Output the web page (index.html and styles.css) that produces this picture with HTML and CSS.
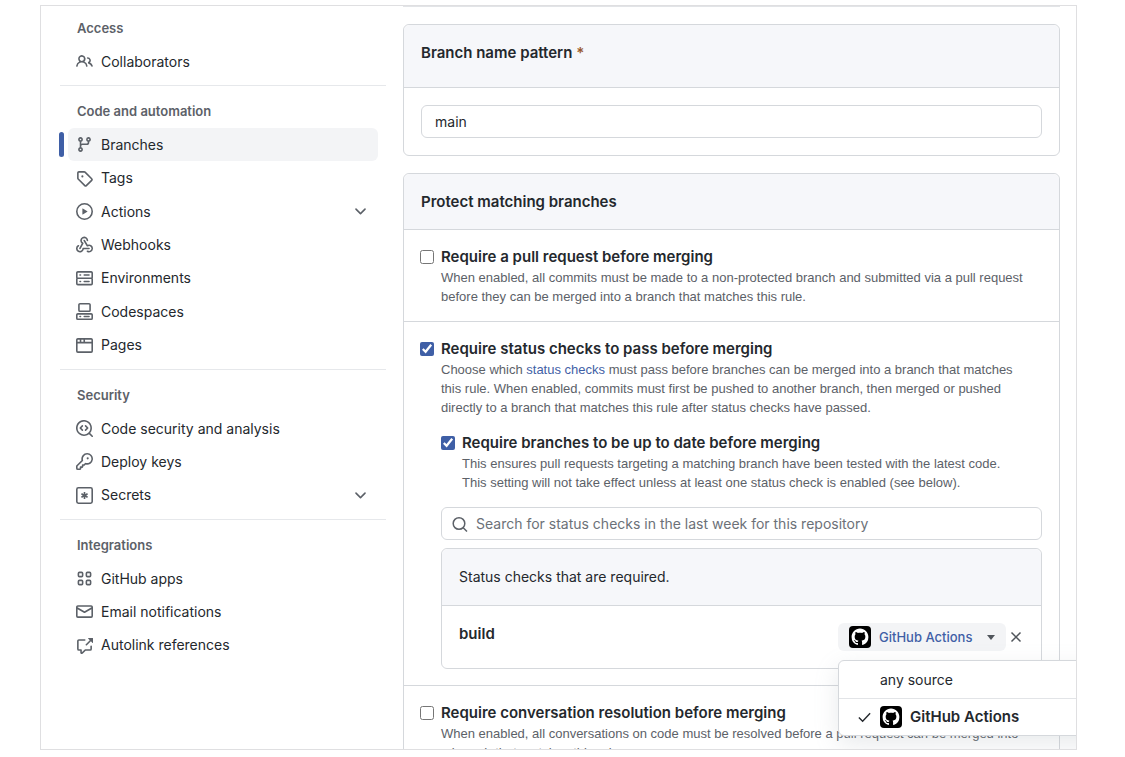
FILE: index.html
```html
<!DOCTYPE html>
<html lang="en">
<head>
<meta charset="utf-8">
<meta name="viewport" content="width=device-width, initial-scale=1">
<title>Branch protection rule</title>
<link rel="stylesheet" href="styles.css">
</head>
<body>
<svg class="sprite" aria-hidden="true">
  <symbol id="github" viewBox="0 0 22 22">
    <rect width="22" height="22" rx="4" fill="#000"/>
    <path transform="translate(2.6 2.6) scale(1.05)" fill="#fff" d="M8 0c4.42 0 8 3.58 8 8a8.013 8.013 0 0 1-5.45 7.59c-.4.08-.55-.17-.55-.38 0-.27.01-1.13.01-2.2 0-.75-.25-1.23-.54-1.48 1.78-.2 3.65-.88 3.65-3.95 0-.88-.31-1.59-.82-2.15.08-.2.36-1.02-.08-2.12 0 0-.67-.22-2.2.82-.64-.18-1.32-.27-2-.27-.68 0-1.36.09-2 .27-1.53-1.03-2.2-.82-2.2-.82-.44 1.1-.16 1.92-.08 2.12-.51.56-.82 1.28-.82 2.15 0 3.06 1.86 3.75 3.64 3.95-.23.2-.44.55-.51 1.07-.46.21-1.61.55-2.33-.66-.15-.24-.6-.83-1.23-.82-.67.01-.27.38.01.53.34.19.73.9.82 1.13.16.45.68 1.31 2.69.94 0 .67.01 1.3.01 1.49 0 .21-.15.45-.55.38A7.995 7.995 0 0 1 0 8c0-4.42 3.58-8 8-8Z"/>
  </symbol>
  <symbol id="chevron" viewBox="0 0 16 16">
    <path d="M12.78 5.22a.749.749 0 0 1 0 1.06l-4.25 4.25a.749.749 0 0 1-1.06 0L3.22 6.28a.749.749 0 1 1 1.06-1.06L8 8.939l3.72-3.719a.749.749 0 0 1 1.06 0Z"/>
  </symbol>
</svg>

<div class="frame">
  <nav class="sidebar" aria-label="Settings">
    <section class="group">
      <h2 class="group-title">Access</h2>
      <ul class="list">
        <li><a class="item" href="#collaborators"><svg class="icon" viewBox="0 0 16 16"><path d="M2 5.5a3.5 3.5 0 1 1 5.898 2.549 5.508 5.508 0 0 1 3.034 4.084.75.75 0 1 1-1.482.235 4 4 0 0 0-7.9 0 .75.75 0 0 1-1.482-.236A5.507 5.507 0 0 1 3.102 8.05 3.493 3.493 0 0 1 2 5.5ZM11 4a3.001 3.001 0 0 1 2.22 5.018 5.01 5.01 0 0 1 2.56 3.012.749.749 0 0 1-.885.954.752.752 0 0 1-.549-.514 3.507 3.507 0 0 0-2.522-2.372.75.75 0 0 1-.574-.73v-.352a.75.75 0 0 1 .416-.672A1.5 1.5 0 0 0 11 5.5.75.75 0 0 1 11 4Zm-5.5-.5a2 2 0 1 0-.001 3.999A2 2 0 0 0 5.5 3.5Z"/></svg>Collaborators</a></li>
      </ul>
    </section>
    <section class="group">
      <h2 class="group-title">Code and automation</h2>
      <ul class="list list-seven">
        <li><a class="item item-current" href="#branches" aria-current="page"><svg class="icon" viewBox="0 0 16 16"><path d="M9.5 3.25a2.25 2.25 0 1 1 3 2.122V6A2.5 2.5 0 0 1 10 8.5H6a1 1 0 0 0-1 1v1.128a2.251 2.251 0 1 1-1.5 0V5.372a2.25 2.25 0 1 1 1.5 0v1.836A2.493 2.493 0 0 1 6 7h4a1 1 0 0 0 1-1v-.628A2.25 2.25 0 0 1 9.5 3.25Zm-6 0a.75.75 0 1 0 1.5 0 .75.75 0 0 0-1.5 0Zm8.25-.75a.75.75 0 1 0 0 1.5.75.75 0 0 0 0-1.5ZM4.25 12a.75.75 0 1 0 0 1.5.75.75 0 0 0 0-1.5Z"/></svg>Branches</a></li>
        <li><a class="item" href="#tags"><svg class="icon" viewBox="0 0 16 16"><path d="M1 7.775V2.75C1 1.784 1.784 1 2.75 1h5.025c.464 0 .91.184 1.238.513l6.25 6.25a1.75 1.75 0 0 1 0 2.474l-5.026 5.026a1.75 1.75 0 0 1-2.474 0l-6.25-6.25A1.752 1.752 0 0 1 1 7.775Zm1.5 0c0 .066.026.13.073.177l6.25 6.25a.25.25 0 0 0 .354 0l5.025-5.025a.25.25 0 0 0 0-.354l-6.25-6.25a.25.25 0 0 0-.177-.073H2.75a.25.25 0 0 0-.25.25ZM6 5a1 1 0 1 1 0 2 1 1 0 0 1 0-2Z"/></svg>Tags</a></li>
        <li><a class="item" href="#actions"><svg class="icon" viewBox="0 0 16 16"><path d="M8 0a8 8 0 1 1 0 16A8 8 0 0 1 8 0ZM1.5 8a6.5 6.5 0 1 0 13 0 6.5 6.5 0 0 0-13 0Zm4.879-2.773 4.264 2.559a.25.25 0 0 1 0 .428l-4.264 2.559A.25.25 0 0 1 6 10.559V5.442a.25.25 0 0 1 .379-.215Z"/></svg>Actions<svg class="icon chevron"><use href="#chevron"/></svg></a></li>
        <li><a class="item" href="#webhooks"><svg class="icon" viewBox="0 0 16 16"><path d="M5.5 4.25a2.25 2.25 0 0 1 4.5 0 .75.75 0 0 0 1.5 0 3.75 3.75 0 1 0-6.14 2.889l-2.272 4.258a.75.75 0 0 0 1.324.706L7 7.25a.75.75 0 0 0-.309-1.015A2.25 2.25 0 0 1 5.5 4.25Z"/><path d="M7.364 3.607a.75.75 0 0 1 1.03.257l2.608 4.349a3.75 3.75 0 1 1-.628 6.785.75.75 0 0 1 .752-1.299 2.25 2.25 0 1 0-.033-3.88.75.75 0 0 1-1.03-.256L7.107 4.636a.75.75 0 0 1 .257-1.03Z"/><path d="M2.9 8.776A.75.75 0 0 1 2.625 9.8 2.25 2.25 0 1 0 6 11.75a.75.75 0 0 1 .75-.751h5.5a.75.75 0 0 1 0 1.5H7.425a3.751 3.751 0 1 1-5.55-3.998.75.75 0 0 1 1.024.274Z"/></svg>Webhooks</a></li>
        <li><a class="item" href="#environments"><svg class="icon" viewBox="0 0 16 16"><path d="M1.75 1h12.5c.966 0 1.75.784 1.75 1.75v4c0 .372-.116.717-.314 1 .198.283.314.628.314 1v4a1.75 1.75 0 0 1-1.75 1.75H1.75A1.75 1.75 0 0 1 0 12.75v-4c0-.358.109-.707.314-1a1.739 1.739 0 0 1-.314-1v-4C0 1.784.784 1 1.75 1ZM1.5 2.75v4c0 .138.112.25.25.25h12.5a.25.25 0 0 0 .25-.25v-4a.25.25 0 0 0-.25-.25H1.75a.25.25 0 0 0-.25.25Zm.25 5.75a.25.25 0 0 0-.25.25v4c0 .138.112.25.25.25h12.5a.25.25 0 0 0 .25-.25v-4a.25.25 0 0 0-.25-.25ZM7 4.75A.75.75 0 0 1 7.75 4h4.5a.75.75 0 0 1 0 1.5h-4.5A.75.75 0 0 1 7 4.75ZM7.75 10h4.5a.75.75 0 0 1 0 1.5h-4.5a.75.75 0 0 1 0-1.5ZM3 4.75A.75.75 0 0 1 3.75 4h.5a.75.75 0 0 1 0 1.5h-.5A.75.75 0 0 1 3 4.75ZM3.75 10h.5a.75.75 0 0 1 0 1.5h-.5a.75.75 0 0 1 0-1.5Z"/></svg>Environments</a></li>
        <li><a class="item" href="#codespaces"><svg class="icon" viewBox="0 0 16 16"><path d="M0 11.25c0-.966.784-1.75 1.75-1.75h12.5c.966 0 1.75.784 1.75 1.75v3A1.75 1.75 0 0 1 14.25 16H1.75A1.75 1.75 0 0 1 0 14.25Zm2-9.5C2 .784 2.784 0 3.75 0h8.5C13.216 0 14 .784 14 1.75v5a1.75 1.75 0 0 1-1.75 1.75h-8.5A1.75 1.75 0 0 1 2 6.75Zm1.75-.25a.25.25 0 0 0-.25.25v5c0 .138.112.25.25.25h8.5a.25.25 0 0 0 .25-.25v-5a.25.25 0 0 0-.25-.25Zm-2 9.5a.25.25 0 0 0-.25.25v3c0 .138.112.25.25.25h12.5a.25.25 0 0 0 .25-.25v-3a.25.25 0 0 0-.25-.25Z"/><path d="M7 12.75a.75.75 0 0 1 .75-.75h4.5a.75.75 0 0 1 0 1.5h-4.5a.75.75 0 0 1-.75-.75Zm-4 0a.75.75 0 0 1 .75-.75h.5a.75.75 0 0 1 0 1.5h-.5a.75.75 0 0 1-.75-.75Z"/></svg>Codespaces</a></li>
        <li><a class="item" href="#pages"><svg class="icon" viewBox="0 0 16 16"><path d="M0 2.75C0 1.784.784 1 1.75 1h12.5c.966 0 1.75.784 1.75 1.75v10.5A1.75 1.75 0 0 1 14.25 15H1.75A1.75 1.75 0 0 1 0 13.25ZM14.5 6h-13v7.25c0 .138.112.25.25.25h12.5a.25.25 0 0 0 .25-.25Zm-6-3.5v2h6V2.75a.25.25 0 0 0-.25-.25ZM5 2.5v2h2v-2Zm-3.25 0a.25.25 0 0 0-.25.25V4.5h2v-2Z"/></svg>Pages</a></li>
      </ul>
    </section>
    <section class="group">
      <h2 class="group-title">Security</h2>
      <ul class="list list-three">
        <li><a class="item" href="#security"><svg class="icon" viewBox="0 0 16 16"><path d="M8.47 4.97a.75.75 0 0 0 0 1.06L9.94 7.5 8.47 8.97a.75.75 0 1 0 1.06 1.06l2-2a.75.75 0 0 0 0-1.06l-2-2a.75.75 0 0 0-1.06 0ZM6.53 6.03a.75.75 0 0 0-1.06-1.06l-2 2a.75.75 0 0 0 0 1.06l2 2a.75.75 0 1 0 1.06-1.06L5.06 7.5l1.47-1.47Z"/><path d="M12.246 13.307a7.501 7.501 0 1 1 1.06-1.06l2.474 2.473a.749.749 0 1 1-1.06 1.06ZM1.5 7.5a6.002 6.002 0 0 0 3.608 5.504 6.002 6.002 0 0 0 6.486-1.117.748.748 0 0 1 .292-.293A6 6 0 1 0 1.5 7.5Z"/></svg>Code security and analysis</a></li>
        <li><a class="item" href="#keys"><svg class="icon" viewBox="0 0 16 16"><path d="M10.5 0a5.499 5.499 0 1 1-1.288 10.848l-.932.932a.749.749 0 0 1-.53.22H7v.75a.749.749 0 0 1-.22.53l-.5.5a.749.749 0 0 1-.53.22H5v.75a.749.749 0 0 1-.22.53l-.5.5a.749.749 0 0 1-.53.22h-2A1.75 1.75 0 0 1 0 14.25v-2c0-.199.079-.389.22-.53l4.932-4.932A5.5 5.5 0 0 1 10.5 0Zm-4 5.5c-.001.431.069.86.205 1.269a.75.75 0 0 1-.181.768L1.5 12.56v1.69c0 .138.112.25.25.25h1.69l.06-.06v-1.19a.75.75 0 0 1 .75-.75h1.19l.06-.06v-1.19a.75.75 0 0 1 .75-.75h1.19l1.023-1.025a.75.75 0 0 1 .768-.18A4 4 0 1 0 6.5 5.5ZM11 6a1 1 0 1 1 0-2 1 1 0 0 1 0 2Z"/></svg>Deploy keys</a></li>
        <li><a class="item" href="#secrets"><svg class="icon line" viewBox="0 0 16 16"><rect x=".75" y=".75" width="14.5" height="14.5" rx="1.5"/><path d="M8 4.7v6.6M5.1 6.3l5.8 3.4M10.9 6.3L5.1 9.7"/></svg>Secrets<svg class="icon chevron"><use href="#chevron"/></svg></a></li>
      </ul>
    </section>
    <section class="group">
      <h2 class="group-title">Integrations</h2>
      <ul class="list list-three">
        <li><a class="item" href="#apps"><svg class="icon line" viewBox="0 0 16 16"><rect x="2.25" y="2.25" width="4" height="4" rx="1"/><rect x="9.75" y="2.25" width="4" height="4" rx="1"/><rect x="2.25" y="9.75" width="4" height="4" rx="1"/><rect x="9.75" y="9.75" width="4" height="4" rx="1"/></svg>GitHub apps</a></li>
        <li><a class="item" href="#email"><svg class="icon" viewBox="0 0 16 16"><path d="M1.75 2h12.5c.966 0 1.75.784 1.75 1.75v8.5A1.75 1.75 0 0 1 14.25 14H1.75A1.75 1.75 0 0 1 0 12.25v-8.5C0 2.784.784 2 1.75 2ZM1.5 12.251c0 .138.112.25.25.25h12.5a.25.25 0 0 0 .25-.25V5.809L8.38 9.397a.75.75 0 0 1-.76 0L1.5 5.809v6.442Zm13-8.181v-.32a.25.25 0 0 0-.25-.25H1.75a.25.25 0 0 0-.25.25v.32L8 7.88Z"/></svg>Email notifications</a></li>
        <li><a class="item" href="#autolinks"><svg class="icon" viewBox="0 0 16 16"><path d="M2.75 3.5a.25.25 0 0 0-.25.25v7.5c0 .138.112.25.25.25h2a.75.75 0 0 1 .75.75v2.19l2.72-2.72a.749.749 0 0 1 .53-.22h4.5a.25.25 0 0 0 .25-.25v-2.5a.75.75 0 0 1 1.5 0v2.5A1.75 1.75 0 0 1 13.25 13H9.06l-2.573 2.573A1.458 1.458 0 0 1 4 14.543V13H2.75A1.75 1.75 0 0 1 1 11.25v-7.5C1 2.784 1.784 2 2.75 2h5.5a.75.75 0 0 1 0 1.5ZM16 1.25v4.146a.25.25 0 0 1-.427.177L14.03 4.03l-3.75 3.75a.749.749 0 1 1-1.06-1.06l3.75-3.75-1.543-1.543A.25.25 0 0 1 11.604 1h4.146a.25.25 0 0 1 .25.25Z"/></svg>Autolink references</a></li>
      </ul>
    </section>
  </nav>

  <main class="main">
    <section class="box">
      <div class="box-head box-head-tall"><label class="heading" for="pattern">Branch name pattern <span class="required">*</span></label></div>
      <div class="box-body"><input class="field" id="pattern" type="text" value="main"></div>
    </section>

    <section class="box">
      <div class="box-head box-head-short"><h2 class="heading">Protect matching branches</h2></div>

      <div class="rule">
        <input class="tick" type="checkbox" id="pull">
        <div class="rule-text">
          <label class="rule-title" for="pull">Require a pull request before merging</label>
          <p class="note">When enabled, all commits must be made to a non-protected branch and submitted via a pull request<br>before they can be merged into a branch that matches this rule.</p>
        </div>
      </div>

      <div class="rule">
        <input class="tick" type="checkbox" id="checks" checked>
        <div class="rule-text">
          <label class="rule-title" for="checks">Require status checks to pass before merging</label>
          <p class="note">Choose which <a class="link" href="#status">status checks</a> must pass before branches can be merged into a branch that matches<br>this rule. When enabled, commits must first be pushed to another branch, then merged or pushed<br>directly to a branch that matches this rule after status checks have passed.</p>

          <div class="subrule">
            <input class="tick" type="checkbox" id="fresh" checked>
            <div class="rule-text">
              <label class="rule-title" for="fresh">Require branches to be up to date before merging</label>
              <p class="note">This ensures pull requests targeting a matching branch have been tested with the latest code.<br>This setting will not take effect unless at least one status check is enabled (see below).</p>
            </div>
          </div>

          <div class="search">
            <svg class="search-icon" viewBox="0 0 16 16" aria-hidden="true"><circle cx="7" cy="7.5" r="5.8"/><path d="M11.2 11.700l3.800 3.800"/></svg>
            <input class="search-input" type="search" aria-label="Search for status checks" placeholder="Search for status checks in the last week for this repository">
          </div>

          <div class="checks">
            <div class="box-head">Status checks that are required.</div>
            <div class="check">
              <strong class="check-name">build</strong>
              <div class="source">
                <button class="source-button" type="button" aria-haspopup="menu" aria-expanded="true"><svg class="logo"><use href="#github"/></svg>GitHub Actions<span class="caret"></span></button>
                <div class="menu" role="menu">
                  <button class="option" type="button" role="menuitemradio" aria-checked="false"><span class="mark"></span>any source</button>
                  <button class="option option-on" type="button" role="menuitemradio" aria-checked="true"><svg class="mark" viewBox="0 0 16 16"><path d="M2 8l4 4 8-8.500"/></svg><svg class="logo"><use href="#github"/></svg>GitHub Actions</button>
                </div>
              </div>
              <button class="remove" type="button" aria-label="Remove build"><svg class="remove-icon" viewBox="0 0 12 12"><path d="M1.500 1.500l9 9M10.500 1.500l-9 9"/></svg></button>
            </div>
          </div>
        </div>
      </div>

      <div class="rule">
        <input class="tick" type="checkbox" id="talk">
        <div class="rule-text">
          <label class="rule-title" for="talk">Require conversation resolution before merging</label>
          <p class="note">When enabled, all conversations on code must be resolved before a pull request can be merged into<br>a branch that matches this rule.</p>
        </div>
      </div>
    </section>
  </main>
</div>
</body>
</html>
```
FILE: styles.css
```css
:root {
  --text: #24282d;
  --muted: #5c6168;
  --line: #d5d8dc;
  --soft: #f6f7fa;
  --blue: #3f5fa6;
}

* { box-sizing: border-box; }

body {
  margin: 0;
  height: 100vh;
  padding: 5px 48px 7px 40px;
  background: #fff;
  color: var(--text);
  font-family: Inter, "Liberation Sans", sans-serif;
  font-size: 14px;
  line-height: 22px;
}

h2, p, ul { margin: 0; padding: 0; }
ul { list-style: none; }
button, input { font: inherit; color: inherit; }
a { text-decoration: none; }

.sprite { display: none; }

.frame {
  display: flex;
  gap: 17px;
  height: 100%;
  padding: 0 16px 0 19px;
  border: 1px solid #dfdfe1;
  overflow: hidden;
}

/* Sidebar */
.sidebar { flex: 0 0 326px; padding-top: 5px; }
.group { padding-bottom: 7px; }
.group + .group { border-top: 1px solid #e6e8eb; padding-top: 8px; }

.group-title {
  padding-left: 17px;
  color: var(--muted);
  font-size: 13px;
  font-weight: 600;
  line-height: 34px;
}

.list { display: grid; grid-auto-rows: 1fr; min-height: 33px; padding: 0 8px; }
.list-three { min-height: 100px; }
.list-seven { min-height: 234px; }

.item {
  position: relative;
  display: flex;
  align-items: center;
  gap: 8px;
  height: 100%;
  padding: 0 9px 0 8px;
  border-radius: 6px;
  color: var(--text);
}
.item-current { background: #f3f4f6; }
.item-current::before {
  content: "";
  position: absolute;
  left: -9px;
  top: 4px;
  bottom: 4px;
  width: 5px;
  border-radius: 3px;
  background: var(--blue);
}

.icon { flex: none; width: 17px; height: 17px; fill: var(--muted); }
.line { fill: none; stroke: var(--muted); stroke-width: 1.5; }
.chevron { margin-left: auto; }

/* Content */
.main { flex: 1; min-width: 0; border-top: 1px solid #e2e4e7; }

.box { margin-top: 17px; border: 1px solid var(--line); border-radius: 6px; }

.box-head {
  padding: 17px;
  border-bottom: 1px solid var(--line);
  border-radius: 6px 6px 0 0;
  background: var(--soft);
}
.box-head-tall { padding-bottom: 23px; }
.box-head-short { padding-bottom: 16px; }
.box-body { padding: 17px; }

.heading { font-size: 15px; font-weight: 600; }
.required { color: #9a5a2c; }

.field {
  display: block;
  width: 100%;
  height: 33px;
  padding: 0 13px;
  border: 1px solid var(--line);
  border-radius: 6px;
  background: #fff;
}

.rule { display: flex; gap: 7px; padding: 17px 17px 15px 16px; }
.rule + .rule { border-top: 1px solid var(--line); }
.subrule { display: flex; gap: 7px; padding: 16px 0 15px; }
.rule-text { flex: 1; min-width: 0; }
.rule-title { display: block; margin-bottom: 1px; font-size: 15px; font-weight: 600; line-height: 20px; }
.note {
  color: var(--muted);
  font-family: "Liberation Sans", Arial, sans-serif;
  font-size: 13px;
  line-height: 19px;
}
.link { color: var(--blue); }

.tick { flex: none; width: 14px; height: 14px; margin: 3px 0 0; accent-color: var(--blue); }

.search {
  display: flex;
  align-items: center;
  gap: 8px;
  height: 33px;
  padding: 0 10px;
  border: 1px solid var(--line);
  border-radius: 6px;
}
.search-icon { flex: none; width: 16px; height: 16px; fill: none; stroke: var(--muted); stroke-width: 1.5; }
.search-input { flex: 1; min-width: 0; padding: 0; border: 0; background: none; outline: 0; }
.search-input::placeholder { color: #6c7178; opacity: 1; }

.checks { margin: 8px 0 1px; border: 1px solid var(--line); border-radius: 6px; }
.check { display: flex; gap: 1px; padding: 17px; }
.check-name { flex: 1; font-size: 15px; font-weight: 600; }

.source { position: relative; }
.source-button {
  display: flex;
  align-items: center;
  gap: 8px;
  width: 168px;
  height: 28px;
  padding: 0 11px;
  border: 0;
  border-radius: 6px;
  background: #f3f4f6;
  color: var(--blue);
  font-size: 13px;
  font-weight: 500;
  white-space: nowrap;
}
.logo { flex: none; width: 22px; height: 22px; }
.caret {
  margin-left: auto;
  border: 4px solid transparent;
  border-top: 5px solid #50555b;
  border-bottom: 0;
}

.menu {
  position: absolute;
  z-index: 1;
  top: 37px;
  left: 0;
  width: 320px;
  border: 1px solid var(--line);
  border-radius: 6px;
  background: #fff;
  box-shadow: 0 8px 24px rgba(140, 149, 159, 0.2);
  overflow: hidden;
}
.option {
  display: flex;
  align-items: center;
  gap: 8px;
  width: 100%;
  height: 37px;
  padding: 0 18px;
  border: 0;
  background: none;
  text-align: left;
}
.option + .option { border-top: 1px solid #e2e4e7; }
.option-on { font-size: 15px; font-weight: 600; }
.mark { flex: none; width: 15px; height: 15px; fill: none; stroke: var(--text); stroke-width: 1.5; }

.remove { display: grid; place-items: center; width: 17px; height: 28px; padding: 0; border: 0; background: none; }
.remove-icon { width: 12px; height: 12px; fill: none; stroke: #50555b; stroke-width: 1.5; }
```
